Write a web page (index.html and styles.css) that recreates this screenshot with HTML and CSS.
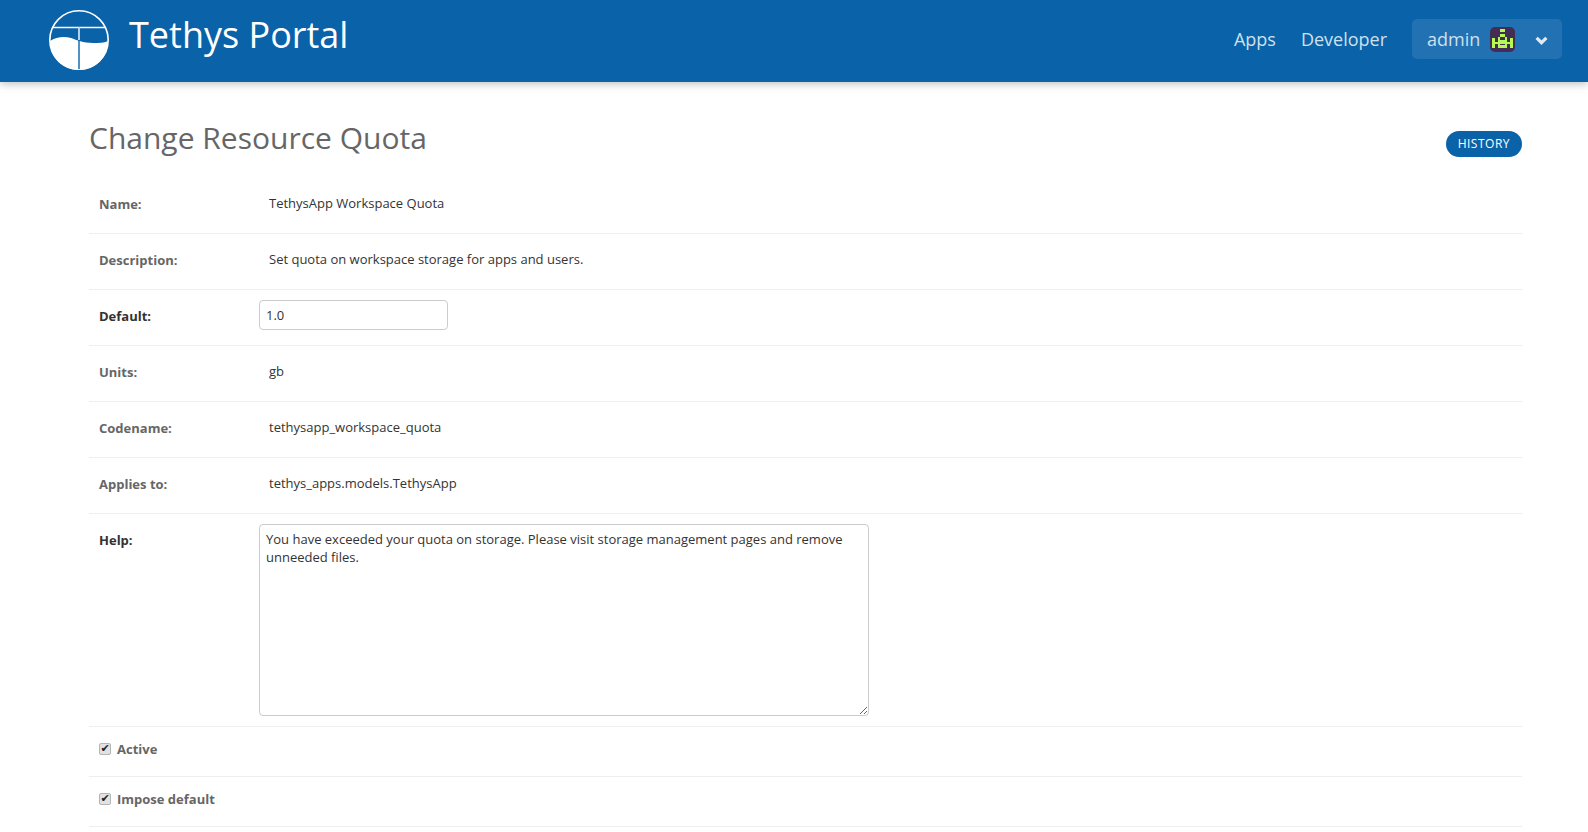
FILE: index.html
```html
<!DOCTYPE html>
<html lang="en">
<head>
    <meta charset="UTF-8">
    <title>Change Resource Quota</title>
    <link rel="stylesheet" href="styles.css">
</head>
<body>
    <header class="site-header">
        <a class="brand" href="#">
            <svg class="brand-logo" viewBox="0 0 60 60" width="60" height="60">
                <circle cx="30" cy="30" r="29.2" fill="none" stroke="#fff" stroke-width="1.6"/>
                <path d="M1 31 C7 27 15 26 22 28 C28 30 34 33 44 33 C50 33 55 33 59 31 C59 48 46 60 30 60 C14 60 1 48 1 31 Z" fill="#fff"/>
                <path d="M3 17.500 H57" stroke="#fff" stroke-width="1.5"/>
                <path d="M30 17 V59" stroke="#0a62a9" stroke-width="1.4"/>
                <path d="M30 17 V30" stroke="#fff" stroke-width="1.4"/>
            </svg>
            <span class="brand-name">Tethys Portal</span>
        </a>
        <nav class="main-nav">
            <a href="#">Apps</a>
            <a href="#">Developer</a>
            <div class="user-menu">
                <span>admin</span>
                <svg class="avatar" viewBox="0 0 25 25" width="25" height="25">
                    <rect width="25" height="25" rx="5" fill="#422d55"/>
                    <path d="M10 2h5v3h-5zM10 7h5v3h-5zM8 10h2v8H8zM15 10h2v8h-2zM10 13h5v2h-5zM5 15h15v2H5zM2 11h3v10H2zM20 11h3v10h-3zM8 18h9v3H8z" fill="#b4fa50"/>
                </svg>
                <svg class="caret" viewBox="0 0 12 8" width="13" height="9">
                    <path d="M1.500 1.500 L6 6 L10.500 1.500" fill="none" stroke="#e4e9ee" stroke-width="3"/>
                </svg>
            </div>
        </nav>
    </header>

    <main class="content">
        <div class="title-bar">
            <h1>Change Resource Quota</h1>
            <a class="history-btn" href="#">HISTORY</a>
        </div>
        <form>
            <div class="row">
                <label>Name:</label>
                <div class="readonly">TethysApp Workspace Quota</div>
            </div>
            <div class="row">
                <label>Description:</label>
                <div class="readonly">Set quota on workspace storage for apps and users.</div>
            </div>
            <div class="row">
                <label class="required" for="id_default">Default:</label>
                <input class="text-input" type="text" id="id_default" value="1.0">
            </div>
            <div class="row">
                <label>Units:</label>
                <div class="readonly">gb</div>
            </div>
            <div class="row">
                <label>Codename:</label>
                <div class="readonly">tethysapp_workspace_quota</div>
            </div>
            <div class="row">
                <label>Applies to:</label>
                <div class="readonly">tethys_apps.models.TethysApp</div>
            </div>
            <div class="row row-help">
                <label class="required" for="id_help">Help:</label>
                <textarea id="id_help">You have exceeded your quota on storage. Please visit storage management pages and remove unneeded files.</textarea>
            </div>
            <div class="row row-check">
                <input type="checkbox" id="id_active" checked>
                <label for="id_active">Active</label>
            </div>
            <div class="row row-check">
                <input type="checkbox" id="id_impose" checked>
                <label for="id_impose">Impose default</label>
            </div>
        </form>
    </main>
</body>
</html>
```

FILE: styles.css
```css
body {
    margin: 0;
    font-family: "Open Sans", sans-serif;
    font-size: 13px;
    color: #333;
    background-color: #fff;
}
a {
    text-decoration: none;
}
.site-header {
    height: 82px;
    box-sizing: border-box;
    padding: 0 26px 0 49px;
    display: flex;
    justify-content: space-between;
    align-items: center;
    background-color: #0a62a9;
    box-shadow: 0 2px 8px rgba(0, 0, 0, 0.25);
}
.brand {
    display: flex;
    align-items: center;
    gap: 20px;
    color: #fff;
}
.brand-logo {
    margin-top: -2px;
}
.brand-name {
    font-size: 36px;
    line-height: 48px;
    margin-top: -12px;
}
.main-nav {
    display: flex;
    align-items: center;
    gap: 25px;
    font-size: 18px;
    margin-top: -4px;
}
.main-nav a {
    color: #cfe0ee;
}
.user-menu {
    width: 150px;
    height: 40px;
    box-sizing: border-box;
    padding: 0 14px 0 15px;
    display: flex;
    align-items: center;
    border-radius: 5px;
    background-color: #2271b2;
    color: #cfe0ee;
}
.avatar {
    margin-left: 10px;
}
.caret {
    margin-left: auto;
    margin-top: 3px;
}
.content {
    padding: 0 66px 0 89px;
}
.title-bar {
    height: 96px;
    box-sizing: border-box;
    display: flex;
    justify-content: space-between;
    align-items: flex-start;
}
h1 {
    margin: 36px 0 0;
    font-size: 30px;
    line-height: 40px;
    font-weight: 400;
    color: #666;
}
.history-btn {
    margin-top: 49px;
    padding: 0 12px;
    height: 26px;
    line-height: 26px;
    border-radius: 13px;
    font-size: 12px;
    letter-spacing: 0.5px;
    color: #fff;
    background-color: #0a62a9;
}
.row {
    height: 56px;
    box-sizing: border-box;
    padding-bottom: 5px;
    border-bottom: 1px solid #eee;
    display: flex;
    align-items: center;
}
.row label {
    width: 170px;
    box-sizing: border-box;
    padding-left: 10px;
    padding-top: 1px;
    flex-shrink: 0;
    font-weight: 700;
    color: #666;
}
.row label.required {
    color: #333;
}
.readonly {
    padding-left: 10px;
    margin-top: -1px;
}
.text-input,
textarea {
    box-sizing: border-box;
    margin: 0;
    padding: 0 6px;
    border: 1px solid #ccc;
    border-radius: 4px;
    font-family: "Open Sans", sans-serif;
    font-size: 13px;
    color: #333;
}
.text-input {
    width: 189px;
    height: 30px;
}
.row-help {
    height: 213px;
    align-items: flex-start;
    padding-top: 10px;
    padding-bottom: 0;
}
.row-help label {
    margin-top: 6px;
}
textarea {
    width: 610px;
    height: 192px;
    padding: 5px 6px;
    line-height: 18px;
}
.row-check {
    height: 50px;
}
.row-check input {
    appearance: none;
    box-sizing: border-box;
    width: 12px;
    height: 12px;
    margin: 0 6px 0 10px;
    border: 1px solid #b5b5b5;
    border-radius: 2px;
    background-color: #e2e2e2;
    display: flex;
    align-items: center;
    justify-content: center;
}
.row-check input::after {
    content: "\2714";
    font-family: "DejaVu Sans", sans-serif;
    font-size: 11px;
    line-height: 10px;
    color: #222;
}
.row-check label {
    width: auto;
    padding: 0;
}
```
